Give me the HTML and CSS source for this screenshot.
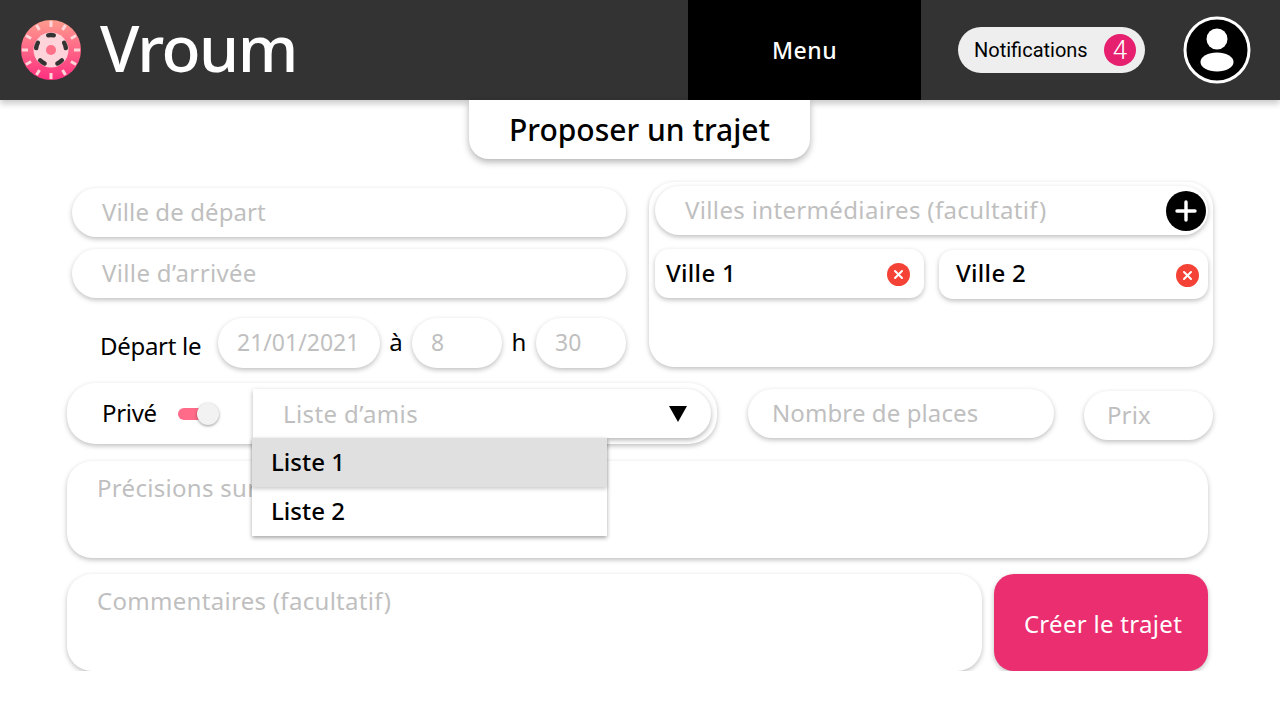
FILE: index.html
```html
<!DOCTYPE html>
<html lang="fr">
<head>
<meta charset="UTF-8">
<title>Vroum</title>
<link rel="stylesheet" href="styles.css">
</head>
<body>
    <header class="topbar">
        <div class="brand">
            <svg class="logo" width="60" height="60" viewBox="-30 -30 60 60">
                <defs>
                    <linearGradient id="wheel" x1="0" y1="0" x2="0" y2="1">
                        <stop offset="0" stop-color="#ff9c8e"/>
                        <stop offset="1" stop-color="#ff2f80"/>
                    </linearGradient>
                </defs>
                <circle r="30" fill="url(#wheel)"/>
                <g stroke="#ffd5d8" stroke-width="3">
                    <path d="M0-29V-23M0 29V23M-29 0H-23M29 0H23"/>
                    <path d="M14.5-25.1L11.5-19.9M25.1-14.5L19.9-11.5M25.1 14.5L19.9 11.5M14.5 25.1L11.5 19.9"/>
                    <path d="M-14.5-25.1L-11.5-19.9M-25.1-14.5L-19.9-11.5M-25.1 14.5L-19.9 11.5M-14.5 25.1L-11.5 19.9"/>
                </g>
                <circle r="17.5" fill="#ffd3da"/>
                <g fill="none" stroke="#333" stroke-width="4.4" stroke-linecap="round">
                    <path d="M-2.8-14.7A15 15 0 0 1 2.8-14.7"/>
                    <path d="M-2.8-14.7A15 15 0 0 1 2.8-14.7" transform="rotate(72)"/>
                    <path d="M-2.8-14.7A15 15 0 0 1 2.8-14.7" transform="rotate(144)"/>
                    <path d="M-2.8-14.7A15 15 0 0 1 2.8-14.7" transform="rotate(216)"/>
                    <path d="M-2.8-14.7A15 15 0 0 1 2.8-14.7" transform="rotate(288)"/>
                </g>
                <circle r="5" fill="#ff6f87"/>
            </svg>
            <span class="brand-name">Vroum</span>
        </div>
        <nav class="menu">Menu</nav>
        <div class="notifications">
            <span>Notifications</span>
            <span class="count">4</span>
        </div>
        <svg class="avatar" width="68" height="68" viewBox="0 0 68 68">
            <circle cx="34" cy="34" r="32" fill="#000" stroke="#fff" stroke-width="3"/>
            <circle cx="34" cy="23" r="10.5" fill="#fff"/>
            <ellipse cx="34" cy="46" rx="16.5" ry="9.5" fill="#fff"/>
        </svg>
    </header>

    <h1 class="title">Proposer un trajet</h1>

    <form class="trip-form">
        <div class="row-top">
            <div class="col-left">
                <div class="field tight">Ville de départ</div>
                <div class="field">Ville d’arrivée</div>
                <div class="date-row">
                    <span class="date-label">Départ le</span>
                    <div class="field small date">21/01/2021</div>
                    <span class="sep">à</span>
                    <div class="field small hour">8</div>
                    <span class="sep wide">h</span>
                    <div class="field small minute">30</div>
                </div>
            </div>
            <div class="panel">
                <div class="field stops">
                    Villes intermédiaires (facultatif)
                    <button class="add" type="button">
                        <svg width="24" height="24" viewBox="0 0 24 24"><path d="M12 3V21M3 12H21" stroke="#fff" stroke-width="3.4" stroke-linecap="round"/></svg>
                    </button>
                </div>
                <div class="chips">
                    <div class="chip">Ville 1
                        <svg class="remove" width="23" height="23" viewBox="0 0 23 23"><circle cx="11.5" cy="11.5" r="11.5" fill="#f44336"/><path d="M8 8L15 15M15 8L8 15" stroke="#fff" stroke-width="2" stroke-linecap="round"/></svg>
                    </div>
                    <div class="chip second">Ville 2
                        <svg class="remove" width="23" height="23" viewBox="0 0 23 23"><circle cx="11.5" cy="11.5" r="11.5" fill="#f44336"/><path d="M8 8L15 15M15 8L8 15" stroke="#fff" stroke-width="2" stroke-linecap="round"/></svg>
                    </div>
                </div>
            </div>
        </div>

        <div class="row-options">
            <div class="private">
                <span class="private-label">Privé</span>
                <span class="toggle"><span class="knob"></span></span>
                <div class="select">
                    Liste d’amis
                    <span class="arrow"></span>
                    <ul class="dropdown">
                        <li class="active">Liste 1</li>
                        <li>Liste 2</li>
                    </ul>
                </div>
            </div>
            <div class="field tight places">Nombre de places</div>
            <div class="field tight price">Prix</div>
        </div>

        <div class="area details">Précisions sur</div>

        <div class="row-bottom">
            <div class="area comments">Commentaires (facultatif)</div>
            <button class="submit" type="button">Créer le trajet</button>
        </div>
    </form>
</body>
</html>
```

FILE: styles.css
```css
* {
    box-sizing: border-box;
}
body {
    font-family: "Noto Sans", Arial, sans-serif;
    margin: 0;
    padding: 0;
    background-color: #fff;
    color: #000;
    overflow: hidden;
}
.topbar {
    display: flex;
    align-items: center;
    height: 100px;
    background-color: #333;
    box-shadow: 0 4px 6px rgba(0, 0, 0, 0.2);
}
.brand {
    display: flex;
    align-items: center;
    gap: 19px;
    width: 688px;
    padding-left: 21px;
}
.brand-name {
    margin-top: -4px;
    color: #fff;
    font-size: 64px;
    font-weight: 500;
    line-height: 1;
    letter-spacing: -1.5px;
}
.menu {
    display: flex;
    align-items: center;
    justify-content: center;
    width: 233px;
    height: 100px;
    background-color: #000;
    color: #fff;
    font-size: 23px;
    font-weight: 500;
    letter-spacing: 0.5px;
}
.notifications {
    display: flex;
    align-items: center;
    justify-content: space-between;
    width: 187px;
    height: 46px;
    margin-left: 37px;
    padding: 0 9px 0 16px;
    border-radius: 23px;
    background-color: #eee;
    font-family: Roboto, Arial, sans-serif;
    font-size: 20px;
}
.count {
    width: 32px;
    height: 32px;
    border-radius: 50%;
    background-color: #e6206e;
    color: #fff;
    font-size: 26px;
    font-weight: 300;
    line-height: 32px;
    text-align: center;
}
.avatar {
    margin-left: 38px;
}
.title {
    position: relative;
    width: 341px;
    height: 59px;
    margin: 0 0 0 469px;
    border-radius: 0 0 20px 20px;
    background-color: #fff;
    box-shadow: 0 3px 7px rgba(0, 0, 0, 0.3);
    font-size: 30px;
    font-weight: 500;
    line-height: 60px;
    text-align: center;
}
.trip-form {
    width: 1146px;
    margin: 23px 0 0 67px;
}
.field {
    height: 49px;
    padding-left: 30px;
    border-radius: 25px;
    background-color: #fff;
    box-shadow: 0 2px 5px rgba(0, 0, 0, 0.25);
    color: #bfbfbf;
    font-size: 24px;
    font-weight: 450;
    letter-spacing: 0.35px;
    line-height: 48px;
}
.field.tight {
    letter-spacing: 0.1px;
}
.row-top {
    display: flex;
    gap: 23px;
}
.col-left {
    display: flex;
    flex-direction: column;
    gap: 12px;
    width: 559px;
    padding: 6px 0 0 5px;
}
.date-row {
    display: flex;
    align-items: center;
    margin-top: 8px;
}
.date-label {
    width: 146px;
    padding-left: 28px;
    font-size: 24px;
    letter-spacing: -0.3px;
    margin-top: 4px;
}
.sep {
    width: 32px;
    font-size: 24px;
    text-align: center;
    margin-top: -4px;
}
.sep.wide {
    width: 34px;
}
.field.small {
    height: 50px;
    padding-left: 19px;
    font-size: 23px;
    font-weight: 400;
    letter-spacing: 0;
}
.date {
    width: 162px;
}
.hour {
    width: 90px;
}
.minute {
    width: 90px;
}
.panel {
    width: 564px;
    height: 185px;
    padding: 4px 5px 4px 6px;
    border-radius: 25px;
    box-shadow: 0 2px 5px rgba(0, 0, 0, 0.25);
}
.stops {
    position: relative;
}
.add {
    position: absolute;
    top: 5px;
    right: 2px;
    display: flex;
    align-items: center;
    justify-content: center;
    width: 40px;
    height: 40px;
    padding: 0;
    border: none;
    border-radius: 50%;
    background-color: #000;
}
.chips {
    display: flex;
    align-items: flex-start;
    gap: 15px;
    margin-top: 14px;
}
.chip {
    display: flex;
    align-items: center;
    justify-content: space-between;
    width: 269px;
    height: 49px;
    padding: 0 14px 2px 11px;
    border-radius: 14px;
    box-shadow: 0 2px 5px rgba(0, 0, 0, 0.25);
    font-size: 24px;
    font-weight: 500;
    letter-spacing: 0.3px;
}
.chip.second {
    margin-top: 1px;
    padding: 0 9px 4px 17px;
}
.remove {
    margin-top: 4px;
}
.second .remove {
    margin-top: 6px;
}
.row-options {
    display: flex;
    align-items: flex-start;
    margin-top: 15px;
}
.private {
    display: flex;
    align-items: center;
    width: 650px;
    height: 61px;
    padding-left: 35px;
    border-radius: 28px;
    box-shadow: 0 2px 5px rgba(0, 0, 0, 0.25);
    font-size: 24px;
}
.private-label {
    width: 76px;
    letter-spacing: -0.3px;
    margin-top: -2px;
}
.toggle {
    position: relative;
    width: 30px;
    height: 12px;
    margin-right: 45px;
    border-radius: 6px;
    background-color: #ff6b88;
}
.knob {
    position: absolute;
    top: -5px;
    right: -11px;
    width: 22px;
    height: 22px;
    border-radius: 50%;
    background-color: #f2f2f2;
    box-shadow: 0 1px 3px rgba(0, 0, 0, 0.4);
}
.select {
    position: relative;
    width: 458px;
    height: 49px;
    padding-left: 30px;
    border-radius: 0 25px 25px 0;
    background-color: #fff;
    box-shadow: 0 2px 5px rgba(0, 0, 0, 0.3);
    color: #bfbfbf;
    font-weight: 450;
    letter-spacing: 0.4px;
    line-height: 49px;
}
.arrow {
    position: absolute;
    top: 17px;
    right: 24px;
    width: 0;
    height: 0;
    border-left: 9px solid transparent;
    border-right: 9px solid transparent;
    border-top: 16px solid #000;
}
.dropdown {
    position: absolute;
    top: 49px;
    left: -1px;
    z-index: 2;
    width: 355px;
    margin: 0;
    padding: 0;
    list-style: none;
    background-color: #fff;
    box-shadow: 0 2px 4px rgba(0, 0, 0, 0.35);
    color: #000;
    font-weight: 500;
    letter-spacing: 0;
}
.dropdown li {
    height: 49px;
    padding-left: 19px;
    line-height: 48px;
}
.dropdown li.active {
    background-color: #e0e0e0;
    box-shadow: 0 2px 4px rgba(0, 0, 0, 0.2);
}
.places {
    width: 306px;
    margin: 6px 0 0 31px;
    padding-left: 24px;
}
.price {
    width: 129px;
    margin: 8px 0 0 30px;
    padding-left: 23px;
}
.area {
    height: 97px;
    padding: 12px 30px;
    border-radius: 25px;
    background-color: #fff;
    box-shadow: 0 2px 5px rgba(0, 0, 0, 0.25);
    color: #bfbfbf;
    font-size: 24px;
    font-weight: 450;
    letter-spacing: 0.3px;
    line-height: 30px;
}
.details {
    width: 1141px;
    margin-top: 17px;
}
.row-bottom {
    display: flex;
    gap: 12px;
    width: 1141px;
    margin-top: 16px;
}
.comments {
    flex: 1;
}
.submit {
    width: 214px;
    height: 97px;
    padding: 2px 0 0 4px;
    border: none;
    border-radius: 20px;
    background-color: #ea2e6f;
    box-shadow: 0 2px 5px rgba(0, 0, 0, 0.25);
    color: #fff;
    font-family: inherit;
    font-size: 24px;
    letter-spacing: 0.3px;
}
```
